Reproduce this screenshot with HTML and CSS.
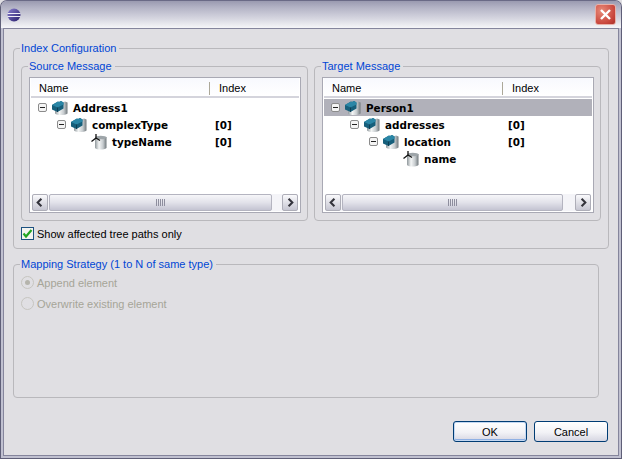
FILE: index.html
```html
<!doctype html>
<html lang="en-us">
  <head>
    <meta charset="utf-8">
    <title>Index Configuration</title>
    <link rel="stylesheet" href="styles.css">
  </head>
  <body>
    <svg class="defs" width="0" height="0">
      <defs>
        <linearGradient id="can" x1="0" x2="1" y1="0" y2="0">
          <stop offset="0" stop-color="#8f979b"/>
          <stop offset="0.35" stop-color="#f4f6f6"/>
          <stop offset="0.7" stop-color="#c6cbce"/>
          <stop offset="1" stop-color="#6f777b"/>
        </linearGradient>
        <symbol id="complex" viewBox="0 0 16 16">
          <path d="M3 6V13.500C5 15.500 13 15.500 15.500 13.500V2.500L13 1.500 3 5z" fill="url(#can)"/>
          <path d="M0 5 6 1.500 7 2 9 1 11.500 2.500V8.500L5.500 12 0 9.500z" fill="#165f7b"/>
          <path d="M0 5 5.500 7.500 11.500 4.500V2.500L9 1 7 2 6 1.500z" fill="#2a86a6"/>
          <path d="M5.500 7.500V12" stroke="#0e3f54"/>
        </symbol>
        <symbol id="field" viewBox="0 0 16 16">
          <path d="M4 4V14C6 16 13 16 15.500 14V3z" fill="url(#can)"/>
          <ellipse cx="9.750" cy="3.500" rx="5.750" ry="1.700" fill="#9ea5a9"/>
          <path d="M5 0V4.500M5 4 .5 7.500M5 4 9 6.500" stroke="#111" stroke-width="1.300" fill="none"/>
        </symbol>
        <symbol id="minus" viewBox="0 0 9 9">
          <rect x=".5" y=".5" width="8" height="8" rx="1.500" fill="#f4f4f4" stroke="#8b8b8b"/>
          <path d="M2 4.500H7" stroke="#222"/>
        </symbol>
        <symbol id="arrow-l" viewBox="0 0 15 15">
          <path d="M9 3.500 5 7.500 9 11.500" fill="none" stroke="#33333b" stroke-width="2.200"/>
        </symbol>
        <symbol id="arrow-r" viewBox="0 0 15 15">
          <path d="M6 3.500 10 7.500 6 11.500" fill="none" stroke="#33333b" stroke-width="2.200"/>
        </symbol>
      </defs>
    </svg>

    <div class="window">
      <div class="titlebar">
        <svg class="app-icon" width="16" height="16" viewBox="0 0 16 16">
          <defs>
            <linearGradient id="sphere" x1="0" x2="1" y1="0" y2="1">
              <stop offset="0" stop-color="#8a7fd0"/>
              <stop offset="1" stop-color="#241a68"/>
            </linearGradient>
          </defs>
          <circle cx="8" cy="8" r="6.500" fill="url(#sphere)"/>
          <path d="M1.500 6.500H14.500M1.500 9.500H14.500" stroke="#f0eef8" stroke-width="1.100"/>
        </svg>
        <button class="close" type="button" aria-label="Close">
          <svg width="13" height="13" viewBox="0 0 13 13">
            <path d="M2 2 11 11M11 2 2 11" stroke="#fff" stroke-width="2.400"/>
          </svg>
        </button>
      </div>

      <div class="content">
        <fieldset class="group index-config">
          <legend>Index Configuration</legend>
          <div class="messages">
            <fieldset class="group message">
              <legend>Source Message</legend>
              <div class="tree">
                <div class="tree-head">
                  <span class="col-name">Name</span>
                  <span class="col-index">Index</span>
                </div>
                <div class="tree-body">
                  <div class="row lvl0">
                    <svg class="twist"><use href="#minus"/></svg>
                    <svg class="node"><use href="#complex"/></svg>
                    <span class="label">Address1</span>
                  </div>
                  <div class="row lvl1">
                    <svg class="twist"><use href="#minus"/></svg>
                    <svg class="node"><use href="#complex"/></svg>
                    <span class="label">complexType</span>
                    <span class="idx">[0]</span>
                  </div>
                  <div class="row lvl2 leaf">
                    <svg class="node"><use href="#field"/></svg>
                    <span class="label">typeName</span>
                    <span class="idx">[0]</span>
                  </div>
                </div>
                <div class="hscroll">
                  <span class="sb-btn"><svg><use href="#arrow-l"/></svg></span>
                  <span class="sb-thumb full"><i></i><i></i><i></i><i></i><i></i></span>
                  <span class="sb-btn"><svg><use href="#arrow-r"/></svg></span>
                </div>
              </div>
            </fieldset>

            <fieldset class="group message">
              <legend>Target Message</legend>
              <div class="tree">
                <div class="tree-head">
                  <span class="col-name">Name</span>
                  <span class="col-index">Index</span>
                </div>
                <div class="tree-body">
                  <div class="row lvl0 selected">
                    <svg class="twist"><use href="#minus"/></svg>
                    <svg class="node"><use href="#complex"/></svg>
                    <span class="label">Person1</span>
                  </div>
                  <div class="row lvl1">
                    <svg class="twist"><use href="#minus"/></svg>
                    <svg class="node"><use href="#complex"/></svg>
                    <span class="label">addresses</span>
                    <span class="idx">[0]</span>
                  </div>
                  <div class="row lvl2">
                    <svg class="twist"><use href="#minus"/></svg>
                    <svg class="node"><use href="#complex"/></svg>
                    <span class="label">location</span>
                    <span class="idx">[0]</span>
                  </div>
                  <div class="row lvl3 leaf">
                    <svg class="node"><use href="#field"/></svg>
                    <span class="label">name</span>
                  </div>
                </div>
                <div class="hscroll">
                  <span class="sb-btn"><svg><use href="#arrow-l"/></svg></span>
                  <span class="sb-thumb"><i></i><i></i><i></i><i></i><i></i></span>
                  <span class="sb-btn"><svg><use href="#arrow-r"/></svg></span>
                </div>
              </div>
            </fieldset>
          </div>

          <div class="check-line">
            <span class="checkbox">
              <svg width="11" height="11" viewBox="0 0 11 11">
                <path d="M1.500 5.500 4 8.500 9.500 2" fill="none" stroke="#22a522" stroke-width="2.200"/>
              </svg>
            </span>
            <span>Show affected tree paths only</span>
          </div>
        </fieldset>

        <fieldset class="group strategy">
          <legend>Mapping Strategy (1 to N of same type)</legend>
          <div class="radio-line first">
            <span class="radio on"></span>
            <span>Append element</span>
          </div>
          <div class="radio-line">
            <span class="radio"></span>
            <span>Overwrite existing element</span>
          </div>
        </fieldset>

        <div class="buttons">
          <button class="btn default" type="button">OK</button>
          <button class="btn" type="button">Cancel</button>
        </div>
      </div>
    </div>
  </body>
</html>
```

FILE: styles.css
```css
html, body
{
	margin: 0;
	padding: 0;
}

body
{
	width: 622px;
	height: 459px;
	overflow: hidden;
	background: #e0dfe3;
	font-family: "Liberation Sans", Arial, sans-serif;
	font-size: 11px;
	color: #000;
}

.defs
{
	display: block;
	height: 0;
}

.window
{
	box-sizing: border-box;
	width: 622px;
	height: 459px;
	display: flex;
	flex-direction: column;
	border: 1px solid #5f5f78;
	border-top-color: #6a6a86;
	border-radius: 7px 7px 0 0;
	background: #c0c0d0;
}

.titlebar
{
	flex: none;
	height: 27px;
	display: flex;
	align-items: center;
	justify-content: space-between;
	padding: 0 5px 0 5px;
	border-radius: 6px 6px 0 0;
	background: linear-gradient(#9a9ab0 0, #b4b4c6 25%, #d6d6e0 65%, #f6f6f8 100%);
}

.app-icon
{
	display: block;
}

.close
{
	box-sizing: border-box;
	width: 21px;
	height: 21px;
	padding: 0;
	display: flex;
	align-items: center;
	justify-content: center;
	border: 1px solid #e8b0a8;
	border-radius: 3px;
	background: radial-gradient(circle at 30% 30%, #e88a78, #c8453c 70%, #a83028);
}

.content
{
	flex: 1;
	min-height: 0;
	display: flex;
	flex-direction: column;
	margin: 0 2px 2px 2px;
	padding: 12px 10px 0 9px;
	border: 1px solid #85859c;
	background: #e0dfe3;
}

.group
{
	box-sizing: border-box;
	margin: 0;
	min-width: 0;
	border: 1px solid #b9b8bc;
	border-radius: 4px;
}

.group legend
{
	margin-left: -1px;
	padding: 1px 3px 0 1px;
	color: #0046d5;
	line-height: 13px;
}

.index-config
{
	flex: none;
	width: 596px;
	height: 208px;
	padding: 4px 7px 0 7px;
}

.messages
{
	display: flex;
	gap: 6px;
}

.message
{
	flex: none;
	width: 287px;
	height: 162px;
	padding: 4px 7px 0 7px;
}

.tree
{
	box-sizing: border-box;
	width: 272px;
	height: 136px;
	display: flex;
	flex-direction: column;
	border: 1px solid #a9a9b4;
	background: #fff;
}

.tree-head
{
	flex: none;
	height: 20px;
	display: flex;
	align-items: center;
	margin: 0 1px;
	padding-top: 2px;
	border-bottom: 2px solid #d4d4dc;
	background: linear-gradient(#f8f9fe, #ffffff);
	box-sizing: border-box;
}

.col-name
{
	box-sizing: border-box;
	width: 179px;
	padding-left: 8px;
	border-right: 1px solid #aca899;
	line-height: 13px;
}

.col-index
{
	padding-left: 9px;
}

.tree-body
{
	flex: 1;
	padding-top: 1px;
	margin: 0 1px;
}

.row
{
	position: relative;
	height: 17px;
	display: flex;
	align-items: center;
	font-family: "DejaVu Sans", sans-serif;
	font-size: 10.4px;
	font-weight: bold;
}

.row.selected
{
	background: #b1b1ba;
}

.lvl0 { padding-left: 7px; }
.lvl1 { padding-left: 26px; }
.lvl2 { padding-left: 45px; }
.lvl3 { padding-left: 64px; }

.leaf .node
{
	margin-left: 15px;
}

.twist
{
	flex: none;
	width: 9px;
	height: 9px;
}

.node
{
	flex: none;
	width: 16px;
	height: 16px;
	margin-left: 5px;
}

.label
{
	margin-left: 5px;
}

.idx
{
	position: absolute;
	left: 184px;
}

.hscroll
{
	flex: none;
	height: 17px;
	display: flex;
	align-items: stretch;
	margin: 0 2px 1px 2px;
	background: #f4f4f8;
}

.sb-btn
{
	box-sizing: border-box;
	flex: none;
	width: 16px;
	display: flex;
	align-items: center;
	justify-content: center;
	border: 1px solid #aeaeb8;
	border-radius: 2px;
	background: linear-gradient(#fafafc, #c6c6d2);
}

.sb-btn svg
{
	width: 15px;
	height: 15px;
}

.sb-thumb
{
	box-sizing: border-box;
	flex: none;
	width: 221px;
	margin: 0 auto 0 1px;
	display: flex;
	align-items: center;
	justify-content: center;
	gap: 1px;
	border: 1px solid #b4b4c0;
	border-radius: 2px;
	background: linear-gradient(#f6f6f9, #e2e2ea 50%, #c4c4d2);
}

.sb-thumb.full
{
	width: 223px;
}

.sb-thumb i
{
	width: 1px;
	height: 7px;
	background: #8e8e9e;
}

.check-line
{
	height: 15px;
	margin-top: 5px;
	display: flex;
	align-items: center;
	gap: 3px;
}

.checkbox
{
	box-sizing: border-box;
	width: 13px;
	height: 13px;
	display: flex;
	align-items: center;
	justify-content: center;
	border: 1px solid #1c5180;
	background: #f4f4f0;
}

.strategy
{
	flex: none;
	width: 586px;
	height: 141px;
	margin-top: 8px;
	padding: 4px 7px 0 7px;
	color: #a6a598;
}

.radio-line
{
	height: 15px;
	margin-top: 6px;
	display: flex;
	align-items: center;
	gap: 3px;
}

.radio-line.first
{
	margin-top: 0;
}

.radio
{
	box-sizing: border-box;
	width: 13px;
	height: 13px;
	display: flex;
	align-items: center;
	justify-content: center;
	border: 1px solid #c6c5c0;
	border-radius: 50%;
	background: #e0dfe3;
}

.radio.on::after
{
	content: "";
	width: 5px;
	height: 5px;
	border-radius: 50%;
	background: #b5b4ac;
}

.buttons
{
	flex: none;
	display: flex;
	justify-content: flex-end;
	gap: 7px;
	margin-top: 23px;
}

.btn
{
	box-sizing: border-box;
	width: 74px;
	height: 21px;
	padding: 0;
	font: inherit;
	border: 1px solid #003c74;
	border-radius: 3px;
	background: linear-gradient(#ffffff, #f2f2f6 55%, #d6d6e2);
}

.btn.default
{
	box-shadow: inset 0 0 0 1px #c4d8f2, inset 0 -1px 0 1px #8fb0e4;
}
```
